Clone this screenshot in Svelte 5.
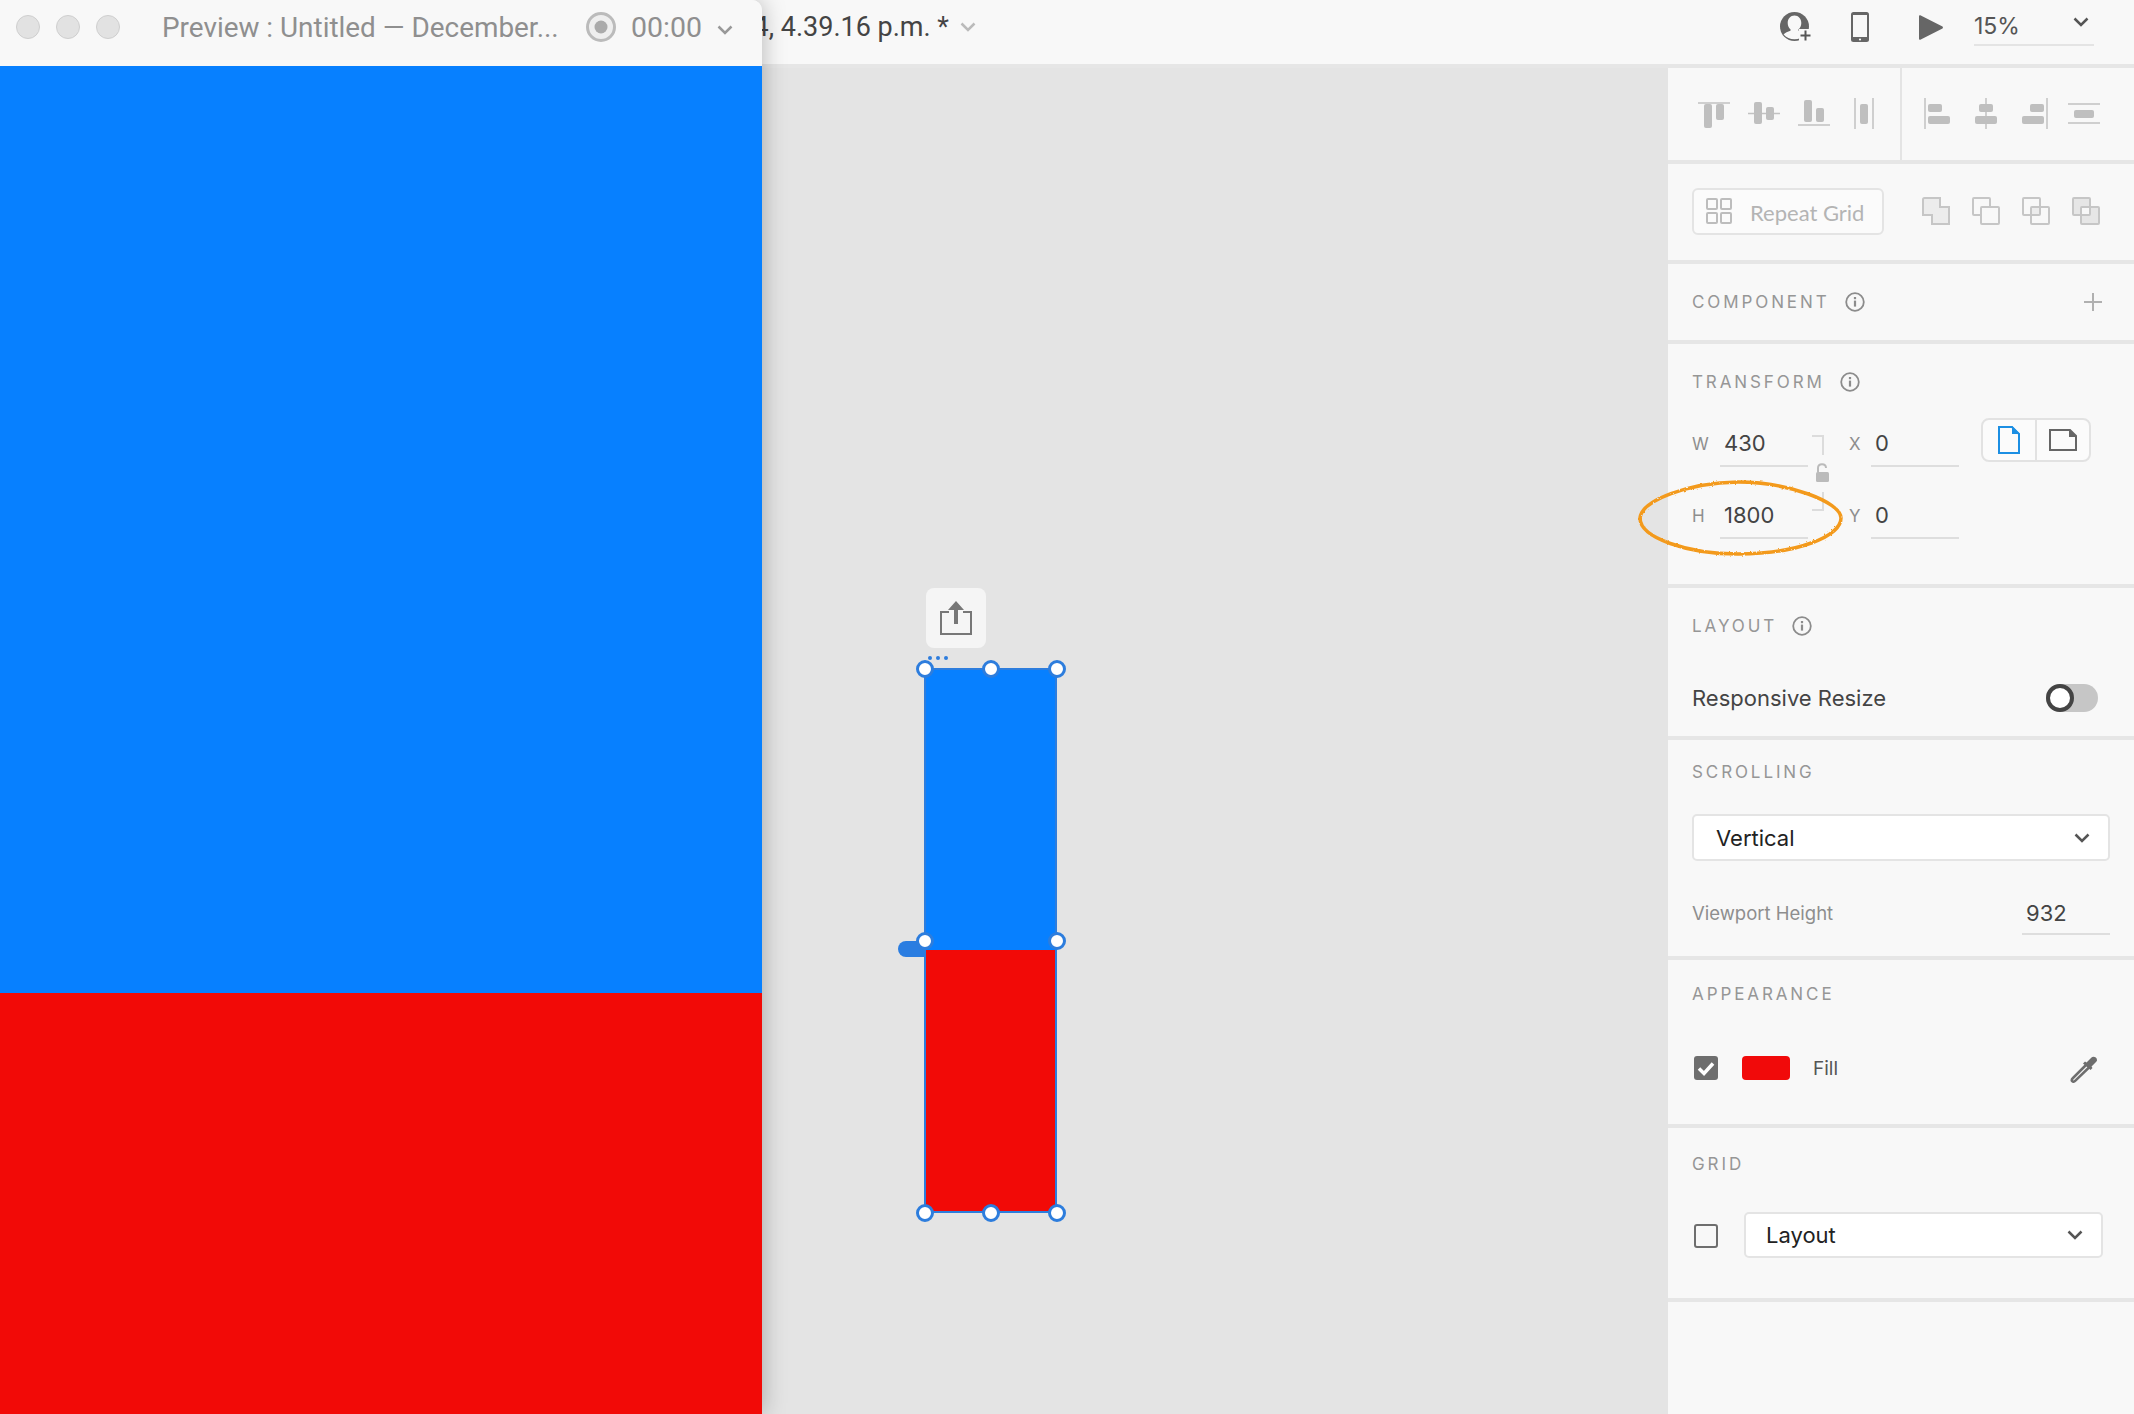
<script>
  const alignA = [
    { lines: [[0, 5, 32, 5]], bars: [[6, 6, 8, 24], [18, 6, 8, 16]] },
    { lines: [[0, 15.5, 32, 15.5]], bars: [[6, 4, 8, 22], [18, 9, 8, 13]] },
    { lines: [[0, 27, 32, 27]], bars: [[6, 2, 8, 22], [18, 10, 8, 14]] },
    { lines: [[7, 0, 7, 31], [25, 0, 25, 31]], bars: [[12, 6, 8, 20]] }
  ];
  const alignB = [
    { lines: [[4, 0, 4, 31]], bars: [[7, 6, 14, 8], [7, 18, 22, 8]] },
    { lines: [[16, 0, 16, 31]], bars: [[9, 6, 14, 8], [5, 18, 22, 8]] },
    { lines: [[28, 0, 28, 31]], bars: [[11, 6, 14, 8], [3, 18, 22, 8]] },
    { lines: [[0, 6, 32, 6], [0, 25, 32, 25]], bars: [[6, 12, 20, 8]] }
  ];
  const handles = [
    [924.7, 668.7], [991, 668.7], [1057, 668.7],
    [924.7, 940.7], [1057, 940.7],
    [924.7, 1212.7], [991, 1212.7], [1057, 1212.7]
  ];
</script>

{#snippet chevron(cls = '')}
  <svg class="chev {cls}" viewBox="0 0 16 10"><path d="M1.5 1.5 8 8l6.5-6.5" /></svg>
{/snippet}

{#snippet info()}
  <svg class="info" viewBox="0 0 20 20">
    <circle cx="10" cy="10" r="8.8" />
    <rect x="8.9" y="8.6" width="2.2" height="6" fill="#8c8c8c" />
    <rect x="8.9" y="5" width="2.2" height="2.2" fill="#8c8c8c" />
  </svg>
{/snippet}

{#snippet alignIcon(icon)}
  <svg class="align-icon" viewBox="0 0 32 32">
    {#each icon.lines as l}
      <line x1={l[0]} y1={l[1]} x2={l[2]} y2={l[3]} />
    {/each}
    {#each icon.bars as b}
      <rect x={b[0]} y={b[1]} width={b[2]} height={b[3]} rx="2" />
    {/each}
  </svg>
{/snippet}

<div class="app">
  <header class="topbar">
    <div class="doc-name">4, 4.39.16 p.m. *</div>
    {@render chevron('doc-chev')}
    <div class="top-tools">
      <svg class="user" viewBox="0 0 32 30">
        <circle cx="14.5" cy="14.5" r="14.5" fill="#666" />
        <path d="M14.500 3.500c-4 0-6.800 3.300-6.800 7.500 0 2.800 1.200 5 2.800 6.300v1.400c-2.900.8-5.300 2-6.900 3.700 2.500 3 6.500 4.800 10.900 4.800 4.400 0 8.400-1.800 10.900-4.800-1.600-1.700-4-2.900-6.900-3.700v-1.400c1.600-1.300 2.800-3.500 2.800-6.300 0-4.200-2.800-7.500-6.800-7.500z" fill="#f8f8f8" />
        <rect x="19" y="17" width="13" height="13" fill="#f8f8f8" />
        <path d="M25.500 18.500v10M20.500 23.500h10" stroke="#555" stroke-width="2" />
      </svg>
      <svg class="phone" viewBox="0 0 18 30">
        <rect width="18" height="30" rx="2.500" fill="#666" />
        <rect x="2" y="3" width="14" height="22" fill="#f8f8f8" />
        <circle cx="9" cy="27.500" r="1.100" fill="#f8f8f8" />
      </svg>
      <svg class="play" viewBox="0 0 24 25"><path d="M0 1.500C0 .3.800-.2 1.800.4L23.500 11.600c.6.4.6 1.400 0 1.800L1.800 24.600C.8 25.200 0 24.700 0 23.500z" fill="#666" /></svg>
      <div class="zoom-box">
        <span>15%</span>
        {@render chevron()}
      </div>
    </div>
  </header>

  <div class="workspace">
    <main class="canvas"></main>

    <aside class="panel">
      <section class="sec align-sec">
        <div class="align-a">
          {#each alignA as icon}{@render alignIcon(icon)}{/each}
        </div>
        <div class="align-b">
          {#each alignB as icon}{@render alignIcon(icon)}{/each}
        </div>
      </section>

      <section class="sec repeat-sec">
        <div class="repeat-btn">
          <svg class="grid-ico" viewBox="0 0 26 26">
            <rect x="1" y="1" width="10" height="10" rx="1" />
            <rect x="15" y="1" width="10" height="10" rx="1" />
            <rect x="1" y="15" width="10" height="10" rx="1" />
            <rect x="15" y="15" width="10" height="10" rx="1" />
          </svg>
          <span>Repeat Grid</span>
        </div>
        <div class="bools">
          <svg viewBox="0 0 28 28"><path d="M1 2.500C1 1.500 1.500 1 2.500 1H18v9h9v17H10v-9H1z" fill="#ececec" /></svg>
          <svg viewBox="0 0 28 28"><rect x="1" y="1" width="17" height="17" rx="1" /><rect x="9" y="10" width="18" height="17" rx="1" fill="#f8f8f8" /></svg>
          <svg viewBox="0 0 28 28"><rect x="9" y="10" width="9" height="8" fill="#ececec" stroke="none" /><rect x="1" y="1" width="17" height="17" rx="1" /><rect x="9" y="10" width="18" height="17" rx="1" /></svg>
          <svg viewBox="0 0 28 28"><path d="M1 1h17v9H9v8H1zM18 10h9v17H9v-9h9z" fill="#e6e6e6" stroke="none" /><rect x="1" y="1" width="17" height="17" rx="1" /><rect x="9" y="10" width="18" height="17" rx="1" /></svg>
        </div>
      </section>

      <section class="sec component-sec">
        <div class="head">
          <span class="cap">COMPONENT</span>
          {@render info()}
          <svg class="plus" viewBox="0 0 18 18"><path d="M9 0v18M0 9h18" /></svg>
        </div>
      </section>

      <section class="sec transform-sec">
        <div class="head">
          <span class="cap">TRANSFORM</span>
          {@render info()}
        </div>
        <div class="transform-body">
          <div class="fields">
            <div class="field-row">
              <div class="field"><label for="w">W</label><div id="w" class="val">430</div></div>
              <div class="field second"><label for="x">X</label><div id="x" class="val">0</div></div>
            </div>
            <div class="field-row">
              <div class="field"><label for="h">H</label><div id="h" class="val">1800</div></div>
              <div class="field second"><label for="y">Y</label><div id="y" class="val">0</div></div>
            </div>
            <svg class="lock" viewBox="0 0 18 76">
              <path d="M1 1h11v19M12 57v18H1" fill="none" stroke="#dcdcdc" stroke-width="2" />
              <path d="M7 37v-4c0-5 8-5 8 0" fill="none" stroke="#bbb" stroke-width="2" />
              <rect x="5" y="37" width="13" height="10" rx="1.500" fill="#bbb" />
            </svg>
          </div>
          <div class="orient">
            <div class="orient-cell">
              <svg viewBox="0 0 22 28" width="22" height="28"><path d="M1 1h13l7 7v19H1z" fill="none" stroke="#1c8fe3" stroke-width="2" /><path d="M14 0l8 8h-8z" fill="#1c8fe3" /></svg>
            </div>
            <div class="orient-cell">
              <svg viewBox="0 0 28 22" width="28" height="22"><path d="M1 1h20l6 6v14H1z" fill="none" stroke="#666" stroke-width="2" /><path d="M20 0l8 8h-8z" fill="#666" /></svg>
            </div>
          </div>
        </div>
      </section>

      <section class="sec layout-sec">
        <div class="head">
          <span class="cap">LAYOUT</span>
          {@render info()}
        </div>
        <div class="resize-row">
          <span>Responsive Resize</span>
          <div class="toggle"><div class="knob"></div></div>
        </div>
      </section>

      <section class="sec scrolling-sec">
        <div class="head"><span class="cap">SCROLLING</span></div>
        <div class="select scroll-select">
          <span>Vertical</span>
          {@render chevron()}
        </div>
        <div class="viewport-row">
          <span class="vp-label">Viewport Height</span>
          <div class="vp-val">932</div>
        </div>
      </section>

      <section class="sec appearance-sec">
        <div class="head"><span class="cap">APPEARANCE</span></div>
        <div class="fill-row">
          <div class="check on">
            <svg viewBox="0 0 24 24"><path d="M5 12.500l5 5 9-10" fill="none" stroke="#fff" stroke-width="3.500" /></svg>
          </div>
          <div class="swatch"></div>
          <span class="fill-label">Fill</span>
          <svg class="dropper" viewBox="0 0 28 28">
            <path d="M17 8 3 22c-1.500 1.500-1.500 2.500-.8 3.200s1.800.8 3.200-.6L19.500 11" fill="none" stroke="#6e6e6e" stroke-width="2.500" />
            <path d="M13 7.500l2-2 1.500 1 5-5c1.500-1.500 5.500-.5 5.500 2.500 0 1-.5 1.500-1 2l-4.500 4.500 1 1.500-2 2z" fill="#6e6e6e" />
          </svg>
        </div>
      </section>

      <section class="sec grid-sec">
        <div class="head"><span class="cap">GRID</span></div>
        <div class="grid-row">
          <div class="check"></div>
          <div class="select grid-select">
            <span>Layout</span>
            {@render chevron()}
          </div>
        </div>
      </section>
    </aside>
  </div>

  <!-- artboard on the canvas -->
  <div class="export-btn">
    <svg viewBox="0 0 32 34" width="32" height="34">
      <path d="M9 11H1v22h30V11h-8" fill="none" stroke="#777" stroke-width="2" />
      <path d="M16 0l8 9h-6v14h-4V9H8z" fill="#777" />
    </svg>
  </div>
  <div class="dots"><i></i><i></i><i></i></div>
  <div class="flow-pill"></div>
  <div class="artboard">
    <div class="ab-blue"></div>
    <div class="ab-red"></div>
  </div>
  {#each handles as h}
    <div class="handle" style="left: {h[0]}px; top: {h[1]}px;"></div>
  {/each}

  <svg class="scribble" viewBox="0 0 205 76">
    <defs>
      <filter id="rough"><feTurbulence type="fractalNoise" baseFrequency="0.35" numOctaves="2" seed="3" /><feDisplacementMap in="SourceGraphic" scale="2.500" /></filter>
    </defs>
    <path d="M2 38C4 20 50 3 100 2c50 0 103 20 103 36 0 18-43 36-103 36C50 74 2 58 2 38z" filter="url(#rough)" />
  </svg>

  <!-- preview window floating over the app -->
  <div class="preview">
    <div class="preview-bar">
      <div class="lights"><i></i><i></i><i></i></div>
      <span class="preview-title">Preview : Untitled — December...</span>
      <svg class="record" viewBox="0 0 30 30">
        <circle cx="15" cy="15" r="13.500" fill="#eee" stroke="#bbb" stroke-width="3" />
        <circle cx="15" cy="15" r="6.500" fill="#aaa" />
      </svg>
      <span class="time">00:00</span>
      <svg class="rec-chev" viewBox="0 0 16 10"><path d="M1.500 1.500 8 8l6.500-6.500" /></svg>
    </div>
    <div class="pv-blue"></div>
    <div class="pv-red"></div>
  </div>
</div>

<style>
  :global(body) {
    margin: 0;
    background: #f8f8f8;
  }

  .app {
    position: relative;
    width: 2134px;
    height: 1414px;
    overflow: hidden;
    display: flex;
    flex-direction: column;
    font-family: Inter, "Liberation Sans", sans-serif;
    color: #444;
  }

  .topbar {
    height: 68px;
    box-sizing: border-box;
    flex: none;
    display: flex;
    align-items: center;
    padding-bottom: 10px;
    background: #f8f8f8;
    border-bottom: 4px solid #e6e6e6;
  }

  .doc-name {
    width: 949px;
    flex: none;
    text-align: right;
    white-space: nowrap;
    font-family: Roboto, sans-serif;
    font-size: 27px;
    color: #444;
  }

  .chev {
    width: 16px;
    height: 10px;
    flex: none;
    fill: none;
    stroke: #555;
    stroke-width: 2.500;
  }

  .topbar > .doc-chev {
    margin-left: 11px;
    stroke: #bbb;
  }

  .top-tools {
    margin-left: auto;
    padding-right: 40px;
    display: flex;
    align-items: center;
  }

  .user {
    width: 32px;
    height: 30px;
    margin-right: 39px;
  }

  .phone {
    width: 18px;
    height: 30px;
    margin-right: 50px;
  }

  .play {
    width: 24px;
    height: 25px;
    margin-right: 31px;
  }

  .zoom-box {
    width: 120px;
    height: 36px;
    box-sizing: border-box;
    margin-top: 1px;
    padding: 0 5px 2px 0;
    display: flex;
    align-items: center;
    justify-content: space-between;
    border-bottom: 2px solid #e4e4e4;
    font-size: 23px;
    color: #555;
  }

  .zoom-box .chev {
    margin-bottom: 8px;
  }

  .workspace {
    flex: 1;
    display: flex;
    min-height: 0;
  }

  .canvas {
    flex: 1;
    background: #e4e4e4;
  }

  .panel {
    width: 466px;
    flex: none;
    background: #f8f8f8;
  }

  .sec {
    box-sizing: border-box;
    padding-left: 24px;
    border-bottom: 4px solid #e6e6e6;
  }

  .align-sec {
    height: 96px;
    padding-left: 0;
    display: flex;
  }

  .align-a {
    width: 234px;
    box-sizing: border-box;
    padding-left: 30px;
    display: flex;
    align-items: center;
    gap: 18px;
    border-right: 2px solid #e4e4e4;
  }

  .align-b {
    padding-left: 19px;
    display: flex;
    align-items: center;
    gap: 17px;
  }

  .align-icon {
    width: 32px;
    height: 32px;
    flex: none;
  }

  .align-icon line {
    stroke: #c2c2c2;
    stroke-width: 1.500;
  }

  .align-icon rect {
    fill: #bfbfbf;
  }

  .repeat-sec {
    height: 100px;
    display: flex;
    align-items: center;
    padding-bottom: 2px;
  }

  .repeat-btn {
    width: 192px;
    height: 47px;
    box-sizing: border-box;
    display: flex;
    align-items: center;
    padding-left: 12px;
    gap: 18px;
    background: #fbfbfb;
    border: 2px solid #e4e4e4;
    border-radius: 6px;
    font-family: Lato, sans-serif;
    font-size: 22px;
    color: #b4b4b4;
    white-space: nowrap;
  }

  .repeat-btn span {
    padding-top: 2px;
  }

  .grid-ico {
    width: 26px;
    height: 26px;
    flex: none;
    fill: none;
    stroke: #bdbdbd;
    stroke-width: 2;
  }

  .bools {
    margin-left: 38px;
    display: flex;
    gap: 22px;
  }

  .bools svg {
    width: 28px;
    height: 28px;
    fill: none;
    stroke: #c6c6c6;
    stroke-width: 2;
  }

  .head {
    height: 24px;
    display: flex;
    align-items: center;
  }

  .cap {
    font-size: 17px;
    letter-spacing: 2.900px;
    color: #969696;
  }

  .info {
    width: 20px;
    height: 20px;
    margin-left: 15px;
    fill: none;
    stroke: #8c8c8c;
    stroke-width: 1.800;
    flex: none;
  }

  .info rect {
    stroke: none;
  }

  .component-sec {
    height: 80px;
    padding-top: 26px;
  }

  .plus {
    width: 18px;
    height: 18px;
    margin-left: auto;
    margin-right: 32px;
    fill: none;
    stroke: #b0b0b0;
    stroke-width: 2;
  }

  .transform-sec {
    height: 244px;
    padding-top: 26px;
  }

  .transform-body {
    margin-top: 27px;
    display: flex;
    align-items: flex-start;
  }

  .fields {
    position: relative;
    width: 267px;
    display: flex;
    flex-direction: column;
    gap: 26px;
  }

  .field-row {
    display: flex;
    gap: 41px;
  }

  .field {
    display: flex;
    width: 116px;
    height: 46px;
    align-items: center;
    flex: none;
  }

  .field.second {
    width: 110px;
  }

  .field label {
    width: 28px;
    flex: none;
    font-size: 17px;
    color: #8e8e8e;
  }

  .field.second label {
    width: 22px;
  }

  .val {
    flex: 1;
    height: 46px;
    line-height: 44px;
    box-sizing: border-box;
    padding-left: 4px;
    border-bottom: 2px solid #dedede;
    font-size: 22px;
    color: #444;
  }

  .lock {
    position: absolute;
    left: 119px;
    top: 14px;
    width: 18px;
    height: 76px;
  }

  .orient {
    margin-left: 22px;
    margin-top: -3px;
    width: 110px;
    height: 44px;
    box-sizing: border-box;
    display: flex;
    border: 2px solid #e2e2e2;
    border-radius: 8px;
    background: #fbfbfb;
  }

  .orient-cell {
    flex: 1;
    display: flex;
    align-items: center;
    justify-content: center;
  }

  .orient-cell + .orient-cell {
    border-left: 2px solid #e2e2e2;
  }

  .layout-sec {
    height: 152px;
    padding-top: 26px;
  }

  .resize-row {
    margin-top: 46px;
    height: 28px;
    display: flex;
    align-items: center;
    justify-content: space-between;
    padding-right: 36px;
    font-size: 22px;
  }

  .toggle {
    width: 52px;
    height: 28px;
    border-radius: 14px;
    background: #c6c6c6;
  }

  .knob {
    width: 28px;
    height: 28px;
    box-sizing: border-box;
    border: 4px solid #444;
    border-radius: 50%;
    background: #fff;
  }

  .scrolling-sec {
    height: 220px;
    padding-top: 20px;
  }

  .select {
    box-sizing: border-box;
    display: flex;
    align-items: center;
    justify-content: space-between;
    background: #fff;
    border: 2px solid #e4e4e4;
    border-radius: 5px;
    font-size: 22px;
    color: #222;
  }

  .scroll-select {
    width: 418px;
    height: 47px;
    margin-top: 30px;
    padding: 0 18px 0 22px;
  }

  .viewport-row {
    margin-top: 30px;
    display: flex;
    align-items: center;
    justify-content: space-between;
    width: 418px;
    height: 44px;
  }

  .vp-label {
    font-size: 18.500px;
    color: #8e8e8e;
  }

  .vp-val {
    width: 88px;
    height: 44px;
    line-height: 44px;
    box-sizing: border-box;
    padding-left: 4px;
    border-bottom: 2px solid #dedede;
    font-size: 22px;
  }

  .appearance-sec {
    height: 168px;
    padding-top: 22px;
  }

  .fill-row {
    margin-top: 50px;
    height: 28px;
    display: flex;
    align-items: flex-start;
    padding-left: 2px;
  }

  .check {
    width: 24px;
    height: 24px;
    box-sizing: border-box;
    flex: none;
    border: 2px solid #6e6e6e;
    border-radius: 3px;
  }

  .check.on {
    border: none;
    background: #6e6e6e;
  }

  .check svg {
    display: block;
  }

  .swatch {
    width: 48px;
    height: 24px;
    margin-left: 24px;
    border-radius: 4px;
    background: #f10a0a;
  }

  .fill-label {
    margin-left: 23px;
    font-size: 19px;
    line-height: 26px;
    color: #555;
  }

  .dropper {
    width: 28px;
    height: 28px;
    margin-left: auto;
    margin-right: 36px;
  }

  .grid-sec {
    height: 174px;
    padding-top: 24px;
  }

  .grid-row {
    margin-top: 36px;
    height: 46px;
    display: flex;
    align-items: center;
    padding-left: 2px;
  }

  .grid-row .check {
    margin-top: 2px;
  }

  .grid-select {
    width: 359px;
    height: 46px;
    margin-left: 26px;
    padding: 0 18px 0 20px;
  }

  .export-btn {
    position: absolute;
    left: 926px;
    top: 588px;
    width: 60px;
    height: 60px;
    display: flex;
    align-items: center;
    justify-content: center;
    border-radius: 8px;
    background: #f5f5f5;
  }

  .dots {
    position: absolute;
    left: 928px;
    top: 656px;
    display: flex;
    gap: 4px;
  }

  .dots i {
    width: 4px;
    height: 4px;
    border-radius: 50%;
    background: #2d7ddd;
  }

  .flow-pill {
    position: absolute;
    left: 898px;
    top: 941px;
    width: 32px;
    height: 16px;
    border-radius: 8px 0 0 8px;
    background: #2a7de1;
  }

  .artboard {
    position: absolute;
    left: 924px;
    top: 668px;
    width: 133px;
    height: 545px;
    box-sizing: border-box;
    border: 2px solid #2d7ddd;
    display: flex;
    flex-direction: column;
  }

  .ab-blue {
    height: 280px;
    background: #0780ff;
  }

  .ab-red {
    flex: 1;
    background: #f20a07;
  }

  .handle {
    position: absolute;
    width: 18px;
    height: 18px;
    box-sizing: border-box;
    margin: -9px 0 0 -9px;
    border: 3px solid #2d7ddd;
    border-radius: 50%;
    background: #fff;
  }

  .scribble {
    position: absolute;
    left: 1638px;
    top: 480px;
    width: 205px;
    height: 76px;
    overflow: visible;
    fill: none;
    stroke: #f39a1e;
    stroke-width: 3.500;
  }

  .preview {
    position: absolute;
    left: 0;
    top: 0;
    width: 762px;
    height: 1414px;
    display: flex;
    flex-direction: column;
    border-radius: 0 10px 0 0;
    overflow: hidden;
    box-shadow: 0 0 24px rgba(0, 0, 0, 0.28);
  }

  .preview-bar {
    height: 66px;
    flex: none;
    display: flex;
    align-items: center;
    padding: 0 0 12px 16px;
    box-sizing: border-box;
    background: #f8f8f8;
  }

  .lights {
    display: flex;
    gap: 16px;
  }

  .lights i {
    width: 24px;
    height: 24px;
    box-sizing: border-box;
    border: 1px solid #cfcfcf;
    border-radius: 50%;
    background: #e2e2e2;
  }

  .preview-title {
    margin-left: 42px;
    width: 424px;
    flex: none;
    white-space: nowrap;
    overflow: hidden;
    font-family: Roboto, sans-serif;
    font-size: 27.900px;
    color: #8f8f8f;
  }

  .record {
    width: 30px;
    height: 30px;
    flex: none;
  }

  .time {
    margin-left: 15px;
    font-family: Roboto, sans-serif;
    font-size: 28.500px;
    color: #8f8f8f;
  }

  .rec-chev {
    width: 16px;
    height: 10px;
    margin-left: 15px;
    margin-top: 6px;
    fill: none;
    stroke: #999;
    stroke-width: 2.500;
  }

  .pv-blue {
    height: 927px;
    flex: none;
    background: #0780ff;
  }

  .pv-red {
    flex: 1;
    background: #f20a07;
  }
</style>
